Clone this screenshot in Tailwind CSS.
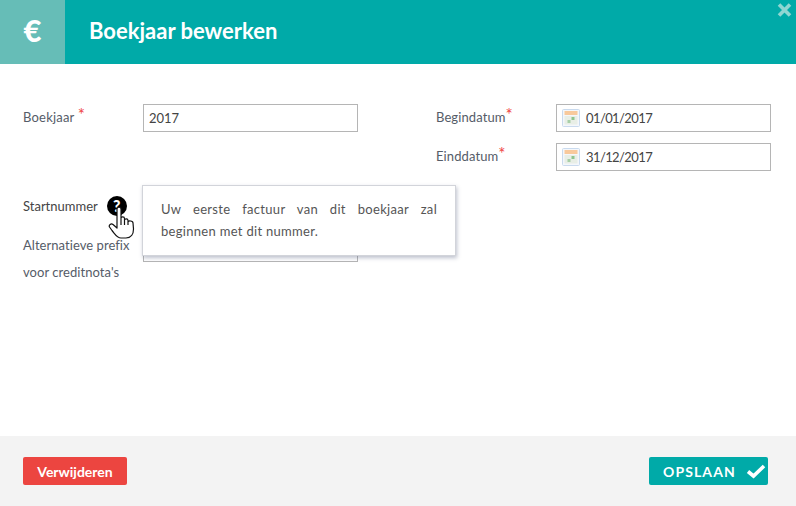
<!DOCTYPE html>
<html lang="nl">
<head>
    <meta charset="UTF-8" />
    <title>Boekjaar bewerken</title>
    <script src="https://cdn.jsdelivr.net/npm/@tailwindcss/browser@4"></script>
</head>
<body class="font-['Lato','Open_Sans',sans-serif] bg-white">
<div class="relative w-[796px] h-[506px] overflow-hidden flex flex-col">

    <!-- header -->
    <div class="h-16 bg-[#00aaa8] flex items-center relative shrink-0">
        <div class="w-[65px] h-16 bg-[#66bdb7] flex items-center justify-center text-white text-[31px] font-black pb-[3px]">€</div>
        <h1 class="ml-6 text-white text-[22px] font-bold leading-none pb-[2px]">Boekjaar bewerken</h1>
        <svg class="absolute right-[4px] top-[3px] w-[15px] h-[14px]" viewBox="0 0 15 14"><path d="M2 1.5 L13 12.5 M13 1.5 L2 12.5" stroke="#8fd6d2" stroke-width="3.6"/></svg>
    </div>

    <!-- form -->
    <div class="flex-1 flex pl-[23px] pt-10 gap-[78px] text-[13px] text-[#555c68]">
        <div class="w-[335px] flex flex-col">
            <div class="flex items-center h-7">
                <label class="w-[120px] pb-[2px] tracking-[0.2px]">Boekjaar <span class="text-[#ef4444] text-[17px] leading-none align-[1px]">*</span></label>
                <input value="2017" class="w-[215px] h-7 border border-[#b5b5b5] px-[5px] text-[13px] text-[#444]" />
            </div>
            <div class="flex items-center h-7 mt-[60px]">
                <label class="w-[120px] flex items-center text-[#444]"><span class="pt-[1px]">Startnummer</span>
                    <span class="ml-[9px] w-5 h-5 rounded-full bg-black text-white text-[16px] leading-none font-black flex items-center justify-center shrink-0">?</span>
                </label>
                <input class="w-[215px] h-7 border border-[#b5b5b5]" />
            </div>
            <div class="flex items-start mt-[14px]">
                <label class="w-[120px] leading-[27px] -mt-[2px] tracking-[0.05px]">Alternatieve prefix<br>voor creditnota's</label>
                <input class="w-[215px] h-7 border border-[#b5b5b5]" />
            </div>
        </div>
        <div class="w-[335px] flex flex-col gap-[11px]">
            <div class="flex items-center h-7">
                <label class="w-[120px] pb-[2px] tracking-[0.1px]">Begindatum<span class="text-[#ef4444] text-[17px] leading-none align-[1px]">*</span></label>
                <div class="w-[215px] h-7 border border-[#b5b5b5] flex items-center pl-[5px] text-[13px] text-[#444] gap-[6px] tracking-[-0.6px]">
                    <svg class="w-[18px] h-[18px]" viewBox="0 0 18 18"><rect x=".5" y=".5" width="17" height="17" rx="1" fill="#f4f7fb" stroke="#c9daee"/><rect x="2.5" y="2" width="13" height="4" fill="#f8c99c"/><rect x="2.5" y="7" width="13" height="8.5" fill="#e8eee6"/><rect x="9.5" y="8" width="3" height="3" fill="#8fc48f"/><rect x="5.5" y="11" width="3" height="3" fill="#a8cfa8"/></svg>
                    <span class="pt-[1px]">01/01/2017</span>
                </div>
            </div>
            <div class="flex items-center h-7">
                <label class="w-[120px] pb-[2px] tracking-[0.1px]">Einddatum<span class="text-[#ef4444] text-[17px] leading-none align-[1px]">*</span></label>
                <div class="w-[215px] h-7 border border-[#b5b5b5] flex items-center pl-[5px] text-[13px] text-[#444] gap-[6px] tracking-[-0.6px]">
                    <svg class="w-[18px] h-[18px]" viewBox="0 0 18 18"><rect x=".5" y=".5" width="17" height="17" rx="1" fill="#f4f7fb" stroke="#c9daee"/><rect x="2.5" y="2" width="13" height="4" fill="#f8c99c"/><rect x="2.5" y="7" width="13" height="8.5" fill="#e8eee6"/><rect x="9.5" y="8" width="3" height="3" fill="#8fc48f"/><rect x="5.5" y="11" width="3" height="3" fill="#a8cfa8"/></svg>
                    <span class="pt-[1px]">31/12/2017</span>
                </div>
            </div>
        </div>
    </div>

    <!-- footer -->
    <div class="h-[70px] bg-[#f3f3f3] flex items-center justify-between pl-[23px] pr-7 shrink-0">
        <button class="w-[104px] h-7 bg-[#ec4540] rounded-[2px] text-white text-[14px] font-bold">Verwijderen</button>
        <button class="w-[119px] h-7 bg-[#00aaa8] rounded-[2px] text-white text-[14px] font-bold tracking-[1.1px] flex items-center pl-[14px] gap-[10px]">OPSLAAN
            <svg class="w-[20px] h-[16px]" viewBox="0 0 20 16"><path d="M2 8.5 L7.5 13 L18 3" fill="none" stroke="white" stroke-width="3.6"/></svg>
        </button>
    </div>

    <!-- tooltip -->
    <div class="absolute left-[142px] top-[185px] w-[314px] h-[71px] bg-white border border-[#d2d4da] shadow-[1px_2px_4px_rgba(90,100,130,0.4)] px-[18px] pt-[12px] text-[13px] leading-[22px] text-[#555] tracking-[0.3px] text-justify">
        Uw eerste factuur van dit boekjaar zal beginnen met dit nummer.
    </div>

    <!-- hand cursor -->
    <svg class="absolute left-[108px] top-[205px] w-[27px] h-[34px]" viewBox="0 0 27 34"><path d="M9 4 C9 1.5 13 1.5 13 4 L13 13 C13 11.5 16.5 11.5 16.5 13.5 L16.5 15 C16.5 13.5 20 13.5 20 15.5 L20 17 C20 15.5 25 15.5 25 18 L25.5 24 C25.5 29 23 33 18 33 L13 33 C9 33 7 29 4 25.5 L1.5 22 C0.5 20 3 18 5 19.5 L9 23 Z M13 13 L13 20 M16.5 15 L16.5 20 M20 17 L20 20" fill="white" stroke="#111" stroke-width="1.2" stroke-linejoin="round"/></svg>
</div>
</body>
</html>
